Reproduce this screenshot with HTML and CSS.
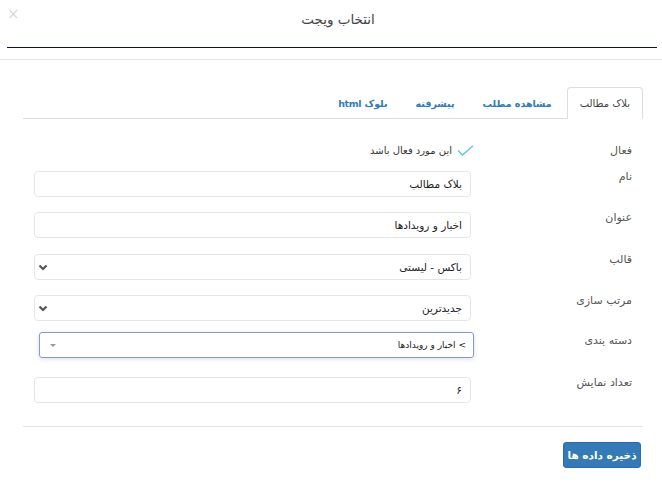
FILE: index.html
```html
<!DOCTYPE html>
<html lang="fa" dir="rtl">
<head>
<meta charset="utf-8">
<title>انتخاب ویجت</title>
<link rel="stylesheet" href="styles.css">
</head>
<body>
<div class="modal">
  <div class="modal-header">
    <span class="close">×</span>
    <h4 class="modal-title">انتخاب ویجت</h4>
    <div class="title-rule"></div>
  </div>
  <div class="modal-body">
    <ul class="nav-tabs">
      <li class="tab active">بلاک مطالب</li>
      <li class="tab">مشاهده مطلب</li>
      <li class="tab">پیشرفته</li>
      <li class="tab">بلوک html</li>
    </ul>
    <form class="form">
      <div class="row row-check">
        <label class="label">فعال</label>
        <div class="field">
          <span class="check">
            <svg width="17" height="11" viewBox="0 0 17 11"><path d="M1 5.5 L5.5 10 L16 0.8" fill="none" stroke="#5bc4e0" stroke-width="1.3"/></svg>
            <span class="check-text">این مورد فعال باشد</span>
          </span>
        </div>
      </div>
      <div class="row">
        <label class="label">نام</label>
        <div class="field"><div class="input">بلاک مطالب</div></div>
      </div>
      <div class="row row-title">
        <label class="label">عنوان</label>
        <div class="field"><div class="input">اخبار و رویدادها</div></div>
      </div>
      <div class="row">
        <label class="label">قالب</label>
        <div class="field"><div class="input select"><span>باکس - لیستی</span><svg class="chev" width="10" height="7" viewBox="0 0 10 7"><path d="M1.5 1.5 L5 5 L8.5 1.5" fill="none" stroke="#555" stroke-width="2.2"/></svg></div></div>
      </div>
      <div class="row row-sort">
        <label class="label">مرتب سازی</label>
        <div class="field"><div class="input select"><span>جدیدترین</span><svg class="chev" width="10" height="7" viewBox="0 0 10 7"><path d="M1.5 1.5 L5 5 L8.5 1.5" fill="none" stroke="#555" stroke-width="2.2"/></svg></div></div>
      </div>
      <div class="row row-cat">
        <label class="label label-cat">دسته بندی</label>
        <div class="field"><div class="select2"><span>&gt; اخبار و رویدادها</span><span class="tri"></span></div></div>
      </div>
      <div class="row row-last">
        <label class="label">تعداد نمایش</label>
        <div class="field"><div class="input">۶</div></div>
      </div>
    </form>
    <div class="footer">
      <button type="button" class="btn">ذخیره داده ها</button>
    </div>
  </div>
</div>
</body>
</html>
```
FILE: styles.css
```css
* { box-sizing: border-box; }
html, body { margin: 0; padding: 0; background: #fff; }
body {
  font-family: "DejaVu Sans", sans-serif;
  font-size: 12px;
  color: #333;
  width: 662px;
  height: 490px;
  overflow: hidden;
}
.modal { width: 662px; }
.modal-header {
  position: relative;
  height: 60px;
  border-bottom: 1px solid #e5e5e5;
  padding-top: 9px;
}
.close {
  position: absolute;
  left: 7px;
  top: 6px;
  font-size: 15px;
  line-height: 16px;
  color: #c8c8c8;
  font-family: "DejaVu Sans", sans-serif;
  font-weight: 300;
}
.modal-title {
  margin: 0;
  padding-left: 14px;
  text-align: center;
  font-size: 13.5px;
  font-weight: normal;
  line-height: 20px;
  color: #444;
}
.title-rule {
  margin: 18px 5px 0 7px;
  border-bottom: 1px solid #0c0c5a;
}
.modal-body { padding: 27px 19px 0 23px; }
.nav-tabs {
  list-style: none;
  margin: 0;
  padding: 0;
  display: flex;
  border-bottom: 1px solid #ddd;
  height: 32px;
}
.tab {
  padding: 0 12px;
  margin-left: 2px;
  height: 31px;
  line-height: 31px;
  font-size: 9.5px;
  font-weight: bold;
  letter-spacing: -0.4px;
  color: #337ab7;
  border: 1px solid transparent;
  border-radius: 4px 4px 0 0;
}
.tab.active {
  color: #444;
  font-size: 10px;
  letter-spacing: 0;
  font-weight: normal;
  border-color: #ddd;
  border-bottom-color: #fff;
  height: 32px;
  background: #fff;
}
.form { padding: 0 11px; }
.row { display: flex; align-items: flex-start; margin-bottom: 15px; }
.label {
  width: 161px;
  flex: none;
  font-size: 11px;
  line-height: 14px;
  color: #555;
  margin-top: -1px;
}
.field { flex: 1; }
.row-check { margin-top: 25px; margin-bottom: 11px; height: 16px; }
.row-check .label { margin-top: 0; }
.check { display: flex; align-items: center; gap: 5px; margin-right: -3px; color: #333; font-size: 10px; line-height: 14px; }
.check svg { margin-top: -2px; }
.input {
  height: 26px;
  border: 1px solid #e6e6e6;
  border-radius: 4px;
  padding: 0 8px;
  line-height: 24px;
  font-size: 10.5px;
  color: #222;
}
.select { display: flex; justify-content: space-between; align-items: center; padding-left: 3px; }
.chev { display: block; }
.row-title { margin-bottom: 16px; }
.row-sort { margin-bottom: 11px; }
.row-cat { margin-bottom: 19px; }
.row-last { margin-bottom: 0; }
.label-cat { margin-top: 2px; }
.select2 {
  height: 26px;
  margin-right: -3px;
  margin-left: 5px;
  border: 1px solid #8a9ac8;
  border-radius: 3px;
  box-shadow: 0 1px 4px rgba(100, 120, 180, 0.25);
  padding: 0 7px 0 10px;
  display: flex;
  justify-content: space-between;
  align-items: center;
  font-size: 9px;
  color: #222;
}
.tri {
  width: 0; height: 0;
  border-left: 3px solid transparent;
  border-right: 3px solid transparent;
  border-top: 3px solid #999;
}
.footer {
  margin-top: 23px;
  border-top: 1px solid #e5e5e5;
  padding: 15px 2px 0 0;
  display: flex;
}
.btn {
  font-family: "DejaVu Sans", sans-serif;
  font-size: 10.5px;
  font-weight: bold;
  letter-spacing: -0.3px;
  color: #fff;
  background: #337ab7;
  border: 1px solid #2e6da4;
  border-radius: 3px;
  height: 26px;
  width: 78px;
  padding: 0;
}
```
